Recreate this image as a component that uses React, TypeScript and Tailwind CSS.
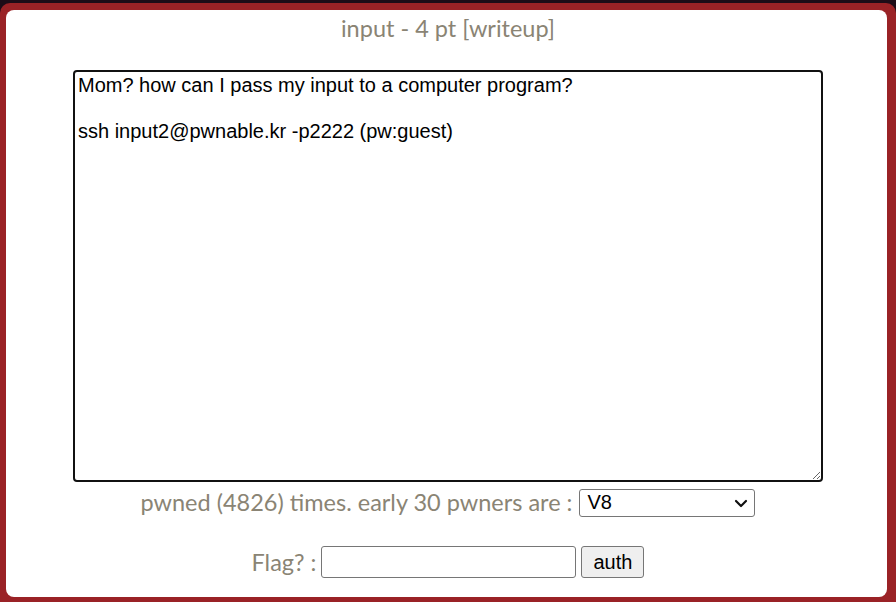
export default function App() {
  return (
    <div className="h-[602px] w-[896px] overflow-hidden bg-[#1d0c17] pt-[3px]">
      <div className="h-[620px] rounded-[10px] bg-[#9a2226] pl-[6px] pr-[9px] pt-[7px]">
        <div
          className="flex h-[587px] flex-col items-center rounded-[8px] bg-white pl-[3px]"
          style={{ fontFamily: 'Lato, sans-serif' }}
        >
          <div className="mt-[3px] text-[23.5px] leading-[30px] text-[#8a8474]">input - 4 pt [writeup]</div>
          <textarea
            readOnly
            className="mt-[27px] h-[412px] w-[750px] resize rounded-[4px] border-2 border-[#111] px-[3px] pt-[2px] text-[20px] leading-[23px] text-black outline-none"
            style={{ fontFamily: '"Liberation Sans", Arial, sans-serif' }}
            defaultValue={'Mom? how can I pass my input to a computer program?\n\nssh input2@pwnable.kr -p2222 (pw:guest)'}
          />
          <div className="mt-[5px] flex items-center text-[23.5px] leading-[30px] text-[#8a8474]">
            <span>pwned (4826) times. early 30 pwners are :</span>
            <div className="relative ml-[7px] mt-[1px]">
              <select
                className="block h-[28px] w-[176px] appearance-none rounded-[3px] border border-[#767676] bg-white pl-[7px] text-[20px] leading-[23px] text-black outline-none"
                style={{ fontFamily: '"Liberation Sans", Arial, sans-serif' }}
                defaultValue="V8"
              >
                <option>V8</option>
              </select>
              <svg
                className="pointer-events-none absolute right-[7px] top-[10px]"
                width="14"
                height="9"
                viewBox="0 0 14 9"
                fill="none"
                stroke="#111"
                strokeWidth="2.2"
                strokeLinecap="round"
                strokeLinejoin="round"
              >
                <path d="M2 2l5 5 5-5" />
              </svg>
            </div>
          </div>
          <div className="mt-[29px] flex items-center text-[23.5px] leading-[30px] text-[#8a8474]">
            <span>Flag? :</span>
            <input className="ml-[5px] h-[32px] w-[255px] rounded-[3px] border border-[#767676] bg-white px-1 text-[20px] text-black outline-none" />
            <button
              className="ml-[5px] h-[32px] w-[63px] rounded-[3px] border border-[#767676] bg-[#efefef] text-[20px] text-black"
              style={{ fontFamily: '"Liberation Sans", Arial, sans-serif' }}
            >
              auth
            </button>
          </div>
        </div>
      </div>
    </div>
  );
}
